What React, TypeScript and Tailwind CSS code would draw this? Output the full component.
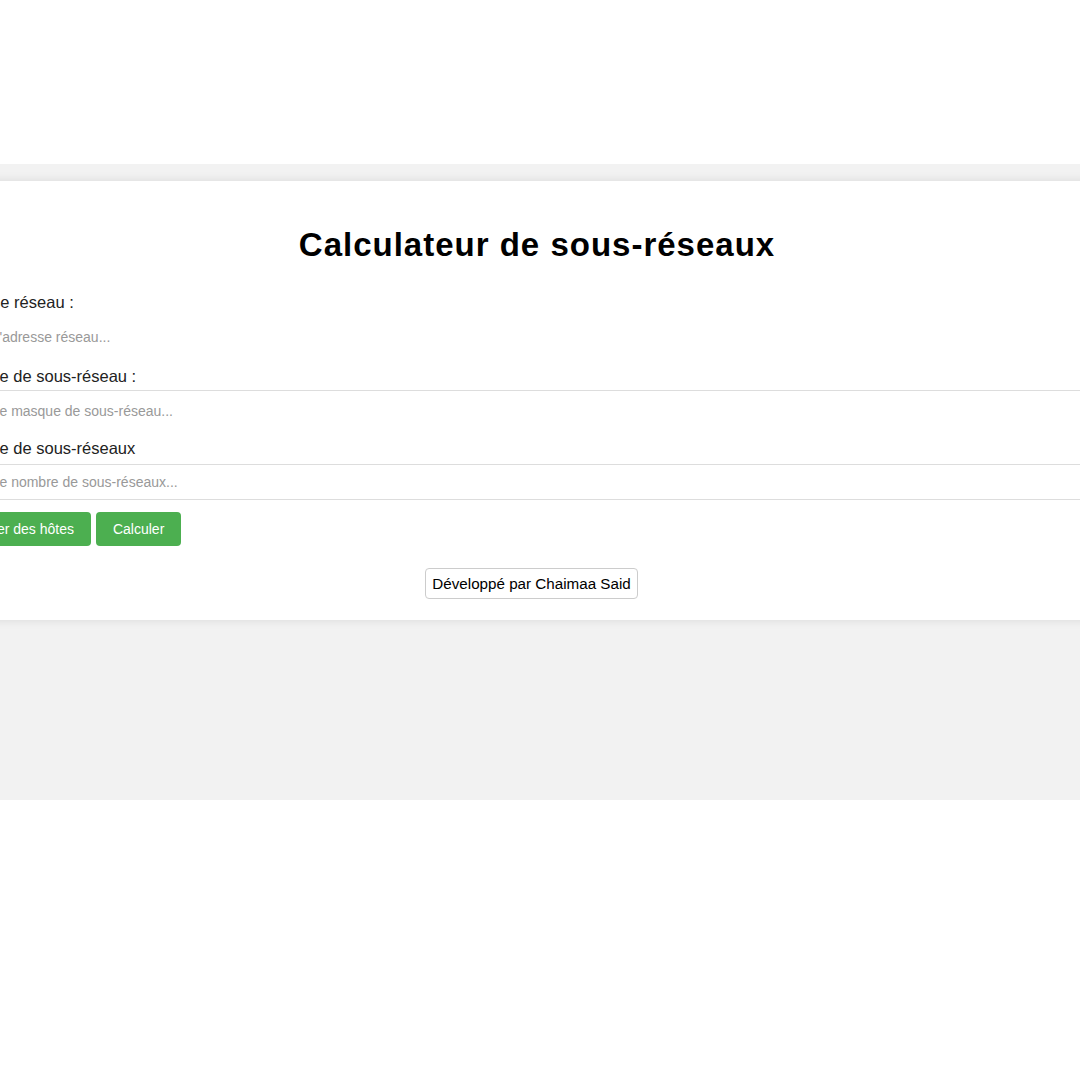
import React from 'react';

const fields = [
  { id: 'network', label: 'Adresse réseau :', placeholder: "Entrez l'adresse réseau..." },
  { id: 'mask', label: 'Masque de sous-réseau :', placeholder: 'Entrez le masque de sous-réseau...' },
  { id: 'count', label: 'Nombre de sous-réseaux', placeholder: 'Entrez le nombre de sous-réseaux...' },
];

export default function App() {
  return (
    <div className="min-h-screen bg-white font-['Liberation_Sans',Arial,sans-serif]">
      <div className="h-[164px]" />

      {/* Gray band */}
      <div className="h-[636px] overflow-hidden bg-[#f2f2f2] pt-[17px]">
        {/* Card */}
        <div className="ml-[-78px] h-[439px] w-[1230px] bg-white px-[20px] pt-[45px] shadow-[0_0_10px_rgba(0,0,0,0.1)]">
          <h2 className="text-center text-[33px] font-bold leading-[37px] tracking-[1px] text-black">
            Calculateur de sous-réseaux
          </h2>

          <form className="flex flex-col" onSubmit={(e) => e.preventDefault()}>
            <label htmlFor={fields[0].id} className="mt-[29px] pl-[7px] text-[16.5px] leading-[20px] text-[#222]">
              {fields[0].label}
            </label>
            <input
              id={fields[0].id}
              placeholder={fields[0].placeholder}
              className="mt-[7px] h-[36px] w-full bg-transparent px-[10px] text-[14px] outline-none placeholder:text-[#999]"
            />

            <label htmlFor={fields[1].id} className="mt-[11px] pl-[8px] text-[16.5px] leading-[20px] text-[#222]">
              {fields[1].label}
            </label>
            <input
              id={fields[1].id}
              placeholder={fields[1].placeholder}
              className="mt-[4px] h-[42px] w-full border-t border-[#ddd] bg-transparent px-[10px] pb-[2px] text-[14px] outline-none placeholder:text-[#999]"
            />

            <label htmlFor={fields[2].id} className="mt-[6px] pl-[8px] text-[16.5px] leading-[20px] text-[#222]">
              {fields[2].label}
            </label>
            <input
              id={fields[2].id}
              placeholder={fields[2].placeholder}
              className="mt-[6px] h-[36px] w-full border-y border-[#ddd] bg-transparent px-[10px] text-[14px] outline-none placeholder:text-[#999]"
            />

            <div className="ml-[-1px] mt-[12px] flex gap-[5px]">
              <button type="button" className="h-[34px] rounded-[4px] bg-[#4caf50] px-[17px] text-[14px] text-white">
                Calculer des hôtes
              </button>
              <button type="submit" className="h-[34px] rounded-[4px] bg-[#4caf50] px-[17px] text-[14px] text-white">
                Calculer
              </button>
            </div>
          </form>

          <div className="mt-[22px] flex justify-center pr-[11px]">
            <span className="rounded-[4px] border border-[#ccc] px-[6px] py-[6px] text-[15.2px] leading-[17px] text-black">
              Développé par Chaimaa Said
            </span>
          </div>
        </div>
      </div>
    </div>
  );
}
